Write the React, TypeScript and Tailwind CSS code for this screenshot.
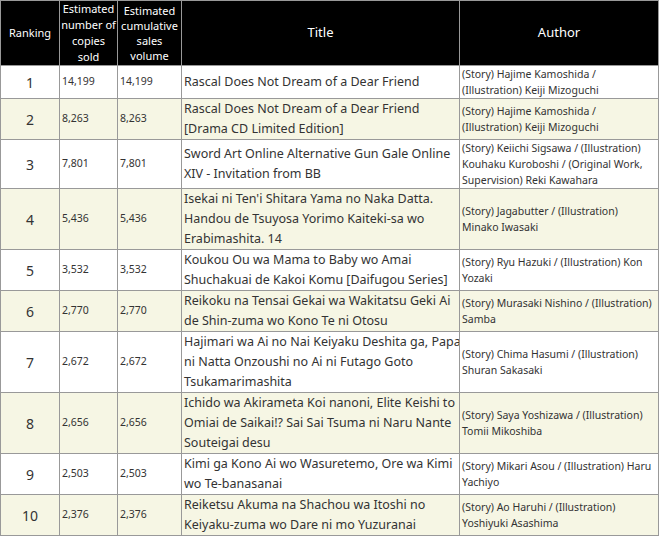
const rows: [string,string,string,string[],string[],number][] = [
["1","14,199","14,199",["Rascal Does Not Dream of a Dear Friend"],["(Story) Hajime Kamoshida /","(Illustration) Keiji Mizoguchi"],33],
["2","8,263","8,263",["Rascal Does Not Dream of a Dear Friend","[Drama CD Limited Edition]"],["(Story) Hajime Kamoshida /","(Illustration) Keiji Mizoguchi"],41],
["3","7,801","7,801",["Sword Art Online Alternative Gun Gale Online","XIV - Invitation from BB"],["(Story) Keiichi Sigsawa / (Illustration)","Kouhaku Kuroboshi / (Original Work,","Supervision) Reki Kawahara"],49],
["4","5,436","5,436",["Isekai ni Ten'i Shitara Yama no Naka Datta.","Handou de Tsuyosa Yorimo Kaiteki-sa wo","Erabimashita. 14"],["(Story) Jagabutter / (Illustration)","Minako Iwasaki"],61],
["5","3,532","3,532",["Koukou Ou wa Mama to Baby wo Amai","Shuchakuai de Kakoi Komu [Daifugou Series]"],["(Story) Ryu Hazuki / (Illustration) Kon","Yozaki"],41],
["6","2,770","2,770",["Reikoku na Tensai Gekai wa Wakitatsu Geki Ai","de Shin-zuma wo Kono Te ni Otosu"],["(Story) Murasaki Nishino / (Illustration)","Samba"],41],
["7","2,672","2,672",["Hajimari wa Ai no Nai Keiyaku Deshita ga, Papa","ni Natta Onzoushi no Ai ni Futago Goto","Tsukamarimashita"],["(Story) Chima Hasumi / (Illustration)","Shuran Sakasaki"],61],
["8","2,656","2,656",["Ichido wa Akirameta Koi nanoni, Elite Keishi to","Omiai de Saikai!? Sai Sai Tsuma ni Naru Nante","Souteigai desu"],["(Story) Saya Yoshizawa / (Illustration)","Tomii Mikoshiba"],61],
["9","2,503","2,503",["Kimi ga Kono Ai wo Wasuretemo, Ore wa Kimi","wo Te-banasanai"],["(Story) Mikari Asou / (Illustration) Haru","Yachiyo"],41],
["10","2,376","2,376",["Reiketsu Akuma na Shachou wa Itoshi no","Keiyaku-zuma wo Dare ni mo Yuzuranai"],["(Story) Ao Haruhi / (Illustration)","Yoshiyuki Asashima"],41],
];
export default function App(){
  const f={fontFamily:'"Noto Sans","DejaVu Sans",sans-serif'};
  return <div className="w-[660px] h-[537px] bg-white" style={f}>
    <table className="border-collapse table-fixed w-[659px] text-[#333]">
      <colgroup><col className="w-[59px]"/><col className="w-[58px]"/><col className="w-[64px]"/><col className="w-[278px]"/><col/></colgroup>
      <thead><tr className="h-[65px] bg-black text-white">
        <th className="border border-[#999] font-normal text-[11px]">Ranking</th>
        <th className="border border-[#999] font-normal text-[11px] leading-[16px]">Estimated number of copies sold</th>
        <th className="border border-[#999] font-normal text-[11px] leading-[15px]">Estimated cumulative sales volume</th>
        <th className="border border-[#999] font-normal text-[13px]">Title</th>
        <th className="border border-[#999] font-normal text-[13px]">Author</th>
      </tr></thead>
      <tbody>{rows.map((r,i)=><tr key={i} style={{height:r[5]}} className={i%2?"bg-[#f6f6e4]":"bg-white"}>
        <td className="border border-[#999] text-center text-[14px]">{r[0]}</td>
        <td className="border border-[#999] text-[10.5px] pl-[2px]">{r[1]}</td>
        <td className="border border-[#999] text-[10.5px] pl-[2px]">{r[2]}</td>
        <td className="border border-[#999] text-[12.5px] leading-[20px] pl-[2px] whitespace-nowrap overflow-hidden">{r[3].map((t,j)=><div key={j}>{t}</div>)}</td>
        <td className="border border-[#999] text-[10.5px] leading-[16px] pl-[2px] whitespace-nowrap overflow-hidden">{r[4].map((t,j)=><div key={j}>{t}</div>)}</td>
      </tr>)}</tbody>
    </table>
  </div>;
}
